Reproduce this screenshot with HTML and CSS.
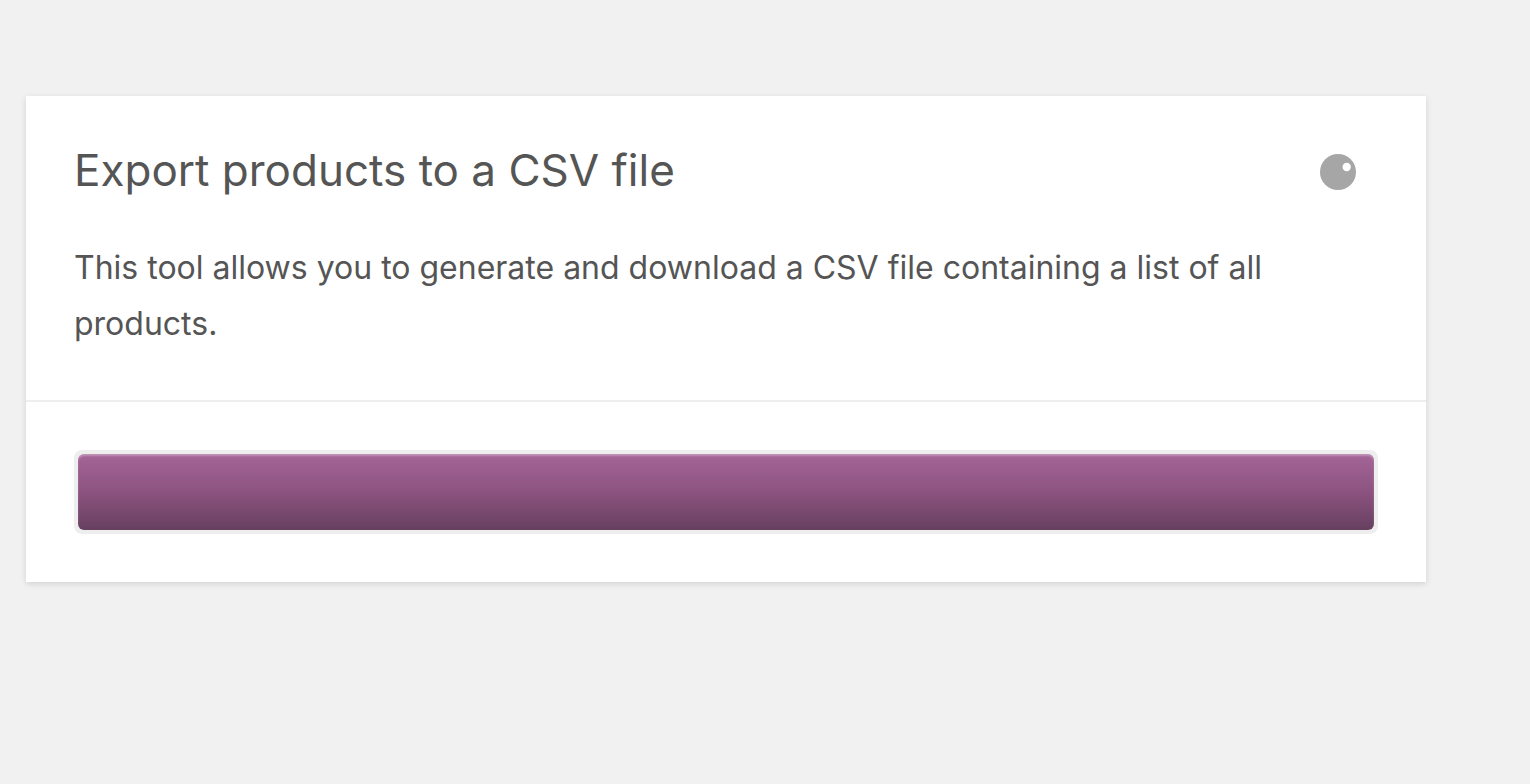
FILE: index.html
```
<!DOCTYPE html>
<html lang="en">
<head>
<meta charset="utf-8">
<meta name="viewport" content="width=device-width, initial-scale=1">
<title>Export products</title>
<link rel="stylesheet" href="styles.css">
</head>
<body>
<main class="exporter">
  <header class="exporter-header">
    <div class="title-row">
      <h1 class="title">Export products to a CSV file</h1>
      <svg class="spinner" viewBox="0 0 36 36" aria-hidden="true">
        <circle cx="18" cy="18" r="18" fill="#a6a6a6"/>
        <circle cx="26.7" cy="13" r="4.2" fill="#fff"/>
      </svg>
    </div>
    <p class="intro">This tool allows you to generate and download a CSV file containing a list of all products.</p>
  </header>
  <section class="exporter-body">
    <div class="progress" role="progressbar" aria-label="Export progress" aria-valuemin="0" aria-valuemax="100" aria-valuenow="100">
      <div class="progress-value" style="width: 100%"></div>
    </div>
  </section>
</main>
</body>
</html>
```
FILE: styles.css
```
* { box-sizing: border-box; }
body {
  margin: 0;
  padding: 96px 26px;
  background: #f1f1f1;
  color: #555;
  font-family: Inter, "Liberation Sans", sans-serif;
}
.exporter {
  max-width: 1400px;
  background: #fff;
  box-shadow: 0 2px 6px rgba(0, 0, 0, .13);
}
.exporter-header {
  padding: 48px;
  border-bottom: 2px solid #eee;
}
.title-row {
  display: flex;
  align-items: flex-start;
  justify-content: space-between;
  padding-right: 22px;
}
.title {
  margin: 0;
  font-size: 44px;
  line-height: 52px;
  font-weight: 400;
}
.spinner {
  flex: none;
  width: 36px;
  height: 36px;
  margin: 10px 0;
}
.intro {
  margin: 40px 0 0;
  font-size: 32px;
  line-height: 56px;
}
.exporter-body { padding: 48px; }
.progress {
  height: 84px;
  padding: 4px;
  border-radius: 8px;
  background: #eee;
}
.progress-value {
  height: 100%;
  border-radius: 6px;
  background: linear-gradient(#a46497, #8c5380 50%, #66405f);
  box-shadow: inset 0 2px 2px rgba(255, 255, 255, .3);
}
```
